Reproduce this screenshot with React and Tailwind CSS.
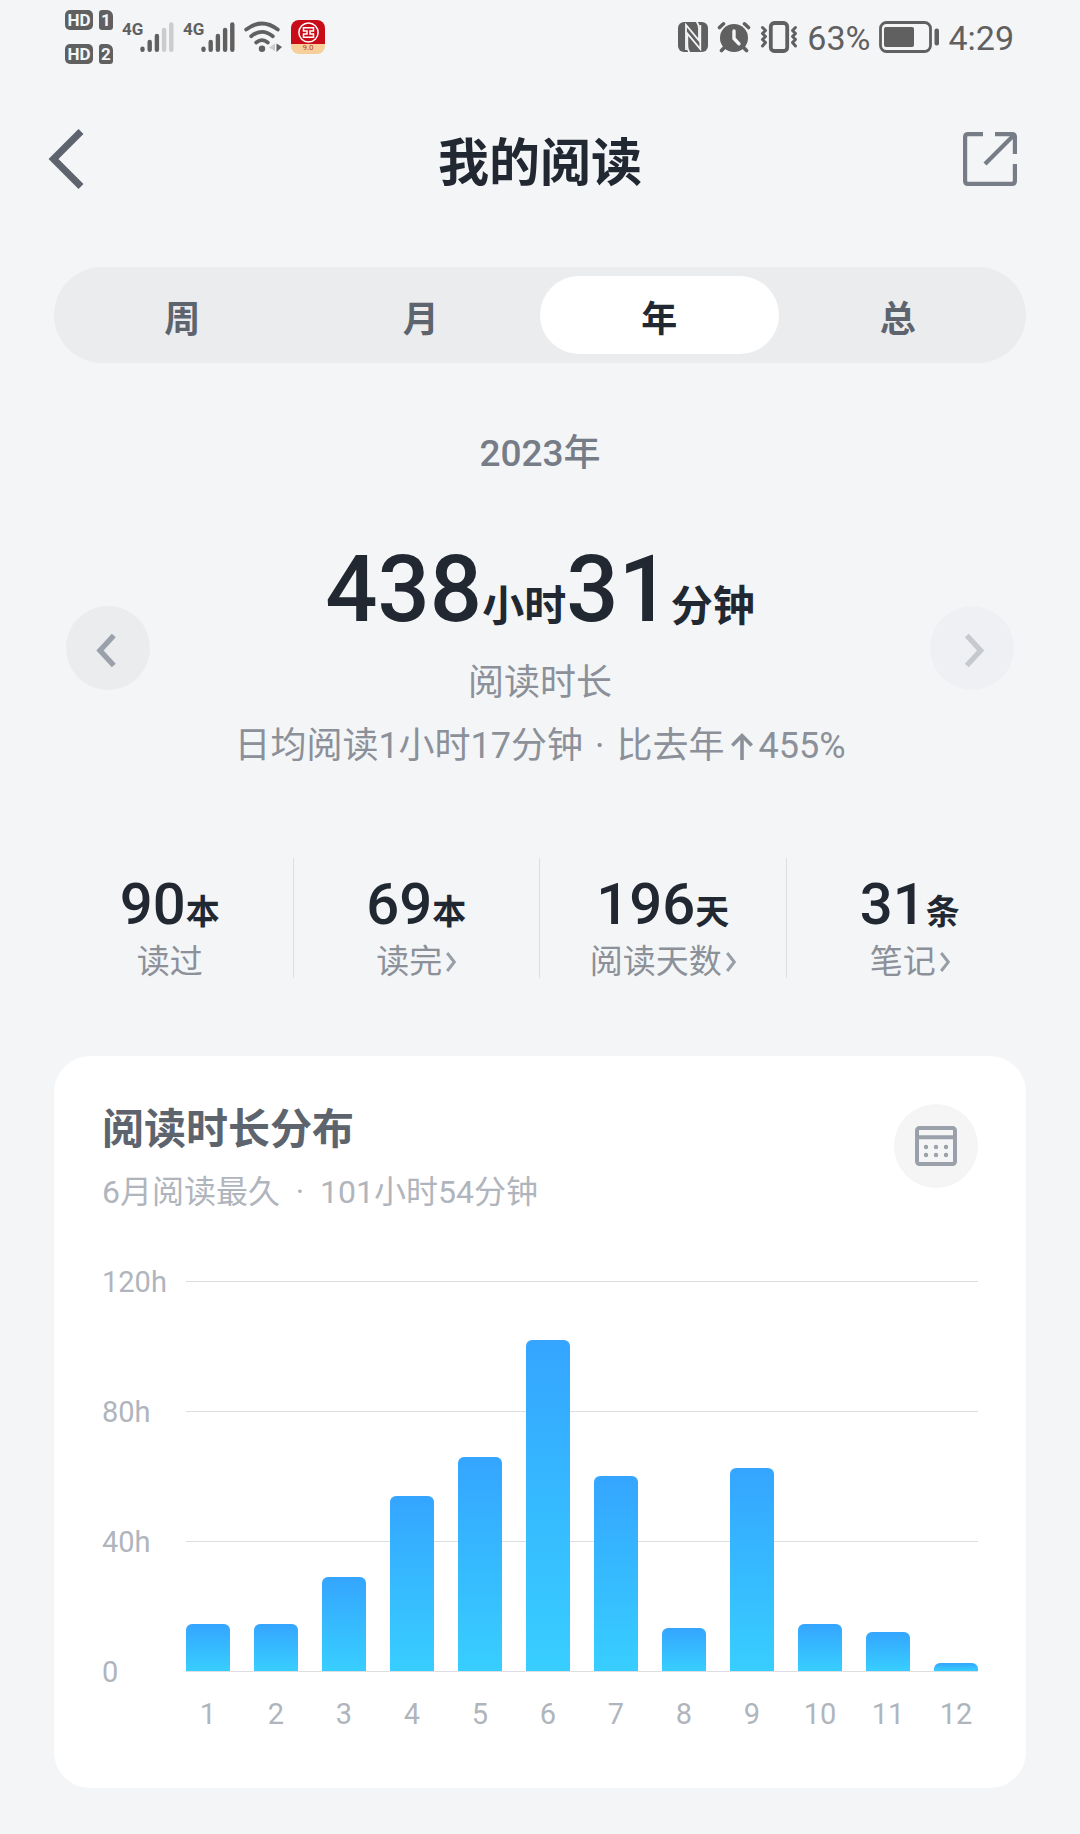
import React, { useState } from 'react';

const TABS = ['周', '月', '年', '总'];

const STATS = [
  { value: '90', unit: '本', label: '读过', link: false },
  { value: '69', unit: '本', label: '读完', link: true },
  { value: '196', unit: '天', label: '阅读天数', link: true },
  { value: '31', unit: '条', label: '笔记', link: true },
];

// Hours read per month
const MONTHS = [14.5, 14.5, 29, 54, 66, 101.9, 60, 13.2, 62.5, 14.5, 12, 2.5];
const MAX_HOURS = 120;
const TICKS = ['120h', '80h', '40h', '0'];

const SimBadge = ({ slot }) => (
  <div className="flex items-center gap-[6px] text-[#f4f5f7] font-bold">
    <span className="flex h-5 w-7 items-center justify-center rounded-[5px] bg-[#606060] text-[17px] leading-none">HD</span>
    <span className="flex h-5 w-[14px] items-center justify-center rounded-[3px] rounded-tr-[6px] bg-[#606060] text-[17px] leading-none">{slot}</span>
  </div>
);

const Signal = ({ level }) => (
  <div className="flex h-8 items-start">
    <span className="w-[18px] text-[17px] font-bold leading-4">4G</span>
    <svg className="h-8 w-[34px]" viewBox="0 0 34 32" fill="none" strokeWidth="4.4" strokeLinecap="round" aria-hidden="true">
      {[27.8, 21, 15, 9, 3.5].map((y, i) => (
        <path key={y} d={`M${2.5 + i * 7.2} ${y}V28.8`} stroke={i < level ? '#606060' : '#cccccc'} />
      ))}
    </svg>
  </div>
);

const WifiIcon = () => (
  <svg className="h-8 w-[38px]" viewBox="0 0 38 32" fill="none" stroke="#606060" strokeWidth="3.8" strokeLinecap="round" aria-hidden="true">
    <path d="M2.2 8.5Q18 -3.5 33.8 8.5" />
    <path d="M7.2 15.2Q18 6.5 28.8 15.2" />
    <path d="M12.2 21.5Q18 16.8 23.8 21.5" />
    <circle cx="18" cy="27.8" r="3.2" fill="#606060" stroke="none" />
    <path d="M31 22.5V30L25 26.5Z" fill="#cccccc" stroke="none" />
    <path d="M32.5 22.5V31L38 26Z" fill="#606060" stroke="none" />
  </svg>
);

const BankAppIcon = () => (
  <div className="flex h-[34px] w-[34px] flex-col items-center overflow-hidden rounded-[8px] bg-linear-to-b from-[#c80d18] from-70% to-[#f6cf9b] to-70%">
    <svg className="mt-[2px] h-[21px] w-[21px] shrink-0" viewBox="0 0 21 21" fill="none" stroke="#ffffff" aria-hidden="true">
      <circle cx="10.5" cy="10.5" r="9.6" strokeWidth="1.5" />
      <path d="M5.5 5.8H15.5V9H12V12H15.5V15.2H5.5V12H9V9H5.5Z" strokeWidth="1.5" />
    </svg>
    <span className="text-[8px] leading-[10px] text-[#b5412e]">9.0</span>
  </div>
);

const NfcIcon = () => (
  <svg className="h-[30px] w-[30px]" viewBox="0 0 30 30" fill="none" aria-hidden="true">
    <rect width="30" height="30" rx="6" fill="#606060" />
    <path d="M8 28V3L21 18.5V8Q21 2 18.5 0" stroke="#f4f5f7" strokeWidth="1.8" />
    <path d="M22.3 3V27L9.3 11.5V22Q9.3 28 11.5 30" stroke="#f4f5f7" strokeWidth="1.8" />
  </svg>
);

const AlarmIcon = () => (
  <svg className="h-8 w-[34px]" viewBox="0 0 34 32" fill="none" stroke="#606060" strokeLinecap="round" aria-hidden="true">
    <circle cx="17" cy="17" r="14" fill="#606060" stroke="none" />
    <path d="M2.5 6.5L6.5 2.8M31.5 6.5L27.5 2.8" strokeWidth="3.6" />
    <path d="M7.5 26.5L4.5 29.5M26.5 26.5L29.5 29.5" strokeWidth="3.6" />
    <path d="M17 10V17.5L22 22.8" stroke="#f4f5f7" strokeWidth="3.4" />
  </svg>
);

const VibrateIcon = () => (
  <svg className="h-8 w-[38px]" viewBox="0 0 38 32" fill="none" stroke="#606060" strokeWidth="3" strokeLinecap="round" strokeLinejoin="round" aria-hidden="true">
    <rect x="10.8" y="2" width="16.4" height="28" rx="3.5" strokeWidth="3.8" />
    <path d="M2.5 6.5L5.5 9.5L2.5 12.5L5.5 15.5L2.5 18.5L5.5 21.5L2.5 25" />
    <path d="M35.5 6.5L32.5 9.5L35.5 12.5L32.5 15.5L35.5 18.5L32.5 21.5L35.5 25" />
  </svg>
);

const BatteryIcon = () => (
  <svg className="h-8 w-[60px]" viewBox="0 0 60 32" fill="none" aria-hidden="true">
    <rect x="1.5" y="1.5" width="50" height="29" rx="6" stroke="#606060" strokeWidth="2.8" />
    <rect x="5" y="6" width="30" height="20" rx="2" fill="#606060" />
    <rect x="55.5" y="7.5" width="4.5" height="17" rx="2" fill="#606060" />
  </svg>
);

const StatusBar = () => (
  <div className="flex h-[74px] items-center justify-between pl-[65px] pr-[66px] text-[#606060]">
    <div className="flex items-center gap-[9px]">
      <div className="flex flex-col gap-[14px]">
        <SimBadge slot="1" />
        <SimBadge slot="2" />
      </div>
      <Signal level={3} />
      <Signal level={5} />
      <WifiIcon />
      <BankAppIcon />
    </div>
    <div className="flex items-center gap-[9px] text-[34px] leading-none">
      <NfcIcon />
      <AlarmIcon />
      <VibrateIcon />
      <span className="pt-[2px]">63%</span>
      <BatteryIcon />
      <span className="pt-[2px]">4:29</span>
    </div>
  </div>
);

const Header = () => (
  <header className="flex h-[170px] items-center justify-between pl-12 pr-[63px]">
    <button type="button" aria-label="返回" className="w-[69px]">
      <svg className="h-[60px] w-9" viewBox="0 0 36 60" fill="none" stroke="#5d646e" strokeWidth="7">
        <path d="M33 2.5L5.5 30L33 57.5" />
      </svg>
    </button>
    <h1 className="pt-2 text-[51px] font-bold leading-none text-[#212832]">我的阅读</h1>
    <button type="button" aria-label="分享">
      <svg className="size-[54px]" viewBox="0 0 54 54" fill="none" stroke="#767d87" strokeWidth="4.2">
        <path d="M20 2.1H5Q2.1 2.1 2.1 5V49Q2.1 51.9 5 51.9H49Q51.9 51.9 51.9 49V32" />
        <path d="M32 2.1H49Q51.9 2.1 51.9 5V22" />
        <path d="M51 3L22 32" />
      </svg>
    </button>
  </header>
);

const StatItem = ({ value, unit, label, link }) => (
  <div className="flex h-[120px] flex-col items-center border-r border-[#dcdee1] pt-[14px] last:border-r-0">
    <div className="flex items-baseline font-medium text-[#212832]">
      <span className="text-[58px] leading-[64px]">{value}</span>
      <span className="text-[34px] font-bold leading-none">{unit}</span>
    </div>
    <div className="flex items-center text-[33px] leading-[52px] text-[#8b9099]">
      {link ? (
        <a href="#" className="flex items-center gap-1">
          {label}
          <svg className="h-5 w-[10px]" viewBox="0 0 10 20" fill="none" stroke="#989ea7" strokeWidth="3" aria-hidden="true">
            <path d="M1.2 1L8.3 10L1.2 19" />
          </svg>
        </a>
      ) : label}
    </div>
  </div>
);

const Chart = () => (
  <div className="grid grid-cols-[84px_1fr] text-[29px] leading-8 text-[#b0b5bd]">
    <div className="flex h-[391px] flex-col justify-between">
      {TICKS.map(tick => (
        <span key={tick} className="flex h-px items-center">{tick}</span>
      ))}
    </div>
    {/* gridlines and bars share one cell */}
    <div className="grid h-[391px]">
      <div className="col-start-1 row-start-1 flex flex-col justify-between">
        {TICKS.map(tick => (
          <div key={tick} className="h-px bg-[#dcdee2]" />
        ))}
      </div>
      <div className="col-start-1 row-start-1 flex items-end justify-between pb-px">
        {MONTHS.map((hours, i) => (
          <div
            key={i}
            className="w-11 rounded-t-[6px] bg-linear-to-b from-[#35a5ff] to-[#38ceff]"
            style={{ height: `${(hours / MAX_HOURS) * 100}%` }}
          />
        ))}
      </div>
    </div>
    <div className="col-start-2 flex justify-between pt-[26px]">
      {MONTHS.map((_, i) => (
        <span key={i} className="w-11 text-center">{i + 1}</span>
      ))}
    </div>
  </div>
);

const App = () => {
  const [tab, setTab] = useState('年');

  return (
    <div className="min-h-screen bg-[#f4f5f7] pb-[46px] font-[Roboto,'Noto_Sans_CJK_SC',sans-serif]">
      <StatusBar />
      <Header />

      <main>
        <div className="px-[54px] pt-[23px]">
          <div role="tablist" className="flex h-24 rounded-full bg-[#ebecee] p-[9px]">
            {TABS.map(name => (
              <button
                key={name}
                type="button"
                role="tab"
                aria-selected={tab === name}
                onClick={() => setTab(name)}
                className={`flex-1 rounded-full pt-[10px] text-[36px] font-bold leading-none ${tab === name ? 'bg-white text-[#212832]' : 'text-[#5d646e]'}`}
              >
                {name}
              </button>
            ))}
          </div>
        </div>

        <p className="mt-[64px] text-center text-[37px] font-medium leading-[54px] text-[#767d87]">2023年</p>

        <section className="mt-[37px] flex items-center justify-between px-[66px]">
          <button type="button" aria-label="上一年" className="size-[84px] rounded-full bg-[#ebecee]">
            <svg viewBox="0 0 84 84" fill="none" stroke="#9aa1aa" strokeWidth="5.4">
              <path d="M47.8 29.5L34 44.5L47.8 59.5" />
            </svg>
          </button>
          <div className="text-center text-[36px] leading-[63px] text-[#8b9099]">
            <h2 className="flex items-baseline justify-center pt-[10px] text-[42px] font-bold leading-none text-[#212832]">
              <span className="text-[92px] font-medium leading-[124px]">438</span>小时
              <span className="text-[92px] font-medium leading-[124px]">31</span>分钟
            </h2>
            <p>阅读时长</p>
            <p className="flex items-center justify-center">
              日均阅读1小时17分钟
              <span className="mx-3">·</span>
              比去年
              <svg className="mx-[6px] h-[27px] w-[22px]" viewBox="0 0 22 27" fill="none" stroke="#8b9099" strokeWidth="3.6" aria-hidden="true">
                <path d="M11 27V3M1.3 12.5L11 2.6L20.7 12.5" />
              </svg>
              455%
            </p>
          </div>
          <button type="button" aria-label="下一年" disabled className="size-[84px] rounded-full bg-[#eff0f4]">
            <svg viewBox="0 0 84 84" fill="none" stroke="#c6cacf" strokeWidth="5.4">
              <path d="M36.8 29.5L50.6 44.5L36.8 59.5" />
            </svg>
          </button>
        </section>

        <section className="mt-20 grid grid-cols-4 px-[47px]">
          {STATS.map(stat => (
            <StatItem key={stat.label} {...stat} />
          ))}
        </section>

        <section className="mx-[54px] mt-[78px] rounded-[36px] bg-white p-12">
          <div className="flex items-start justify-between">
            <div>
              <h2 className="text-[42px] font-bold leading-[52px] text-[#5d646e]">阅读时长分布</h2>
              <p className="mt-3 text-[32px] leading-[48px] text-[#b0b5bd]">6月阅读最久&nbsp;&nbsp;·&nbsp;&nbsp;101小时54分钟</p>
            </div>
            <button type="button" aria-label="阅读日历" className="flex size-[84px] items-center justify-center rounded-full bg-[#f5f5f6]">
              <svg className="h-10 w-[42px]" viewBox="0 0 42 40" fill="none" stroke="#9aa1aa" strokeWidth="4">
                <rect x="2" y="2" width="38" height="36" rx="2.5" />
                <path d="M2 11.2H40" />
                <g fill="#9aa1aa" stroke="none">
                  <circle cx="11" cy="21" r="2.2" />
                  <circle cx="21" cy="21" r="2.2" />
                  <circle cx="31" cy="21" r="2.2" />
                  <circle cx="11" cy="29" r="2.2" />
                  <circle cx="21" cy="29" r="2.2" />
                  <circle cx="31" cy="29" r="2.2" />
                </g>
              </svg>
            </button>
          </div>
          <div className="pb-[10px] pt-[65px]">
            <Chart />
          </div>
        </section>
      </main>
    </div>
  );
};

export default App;
